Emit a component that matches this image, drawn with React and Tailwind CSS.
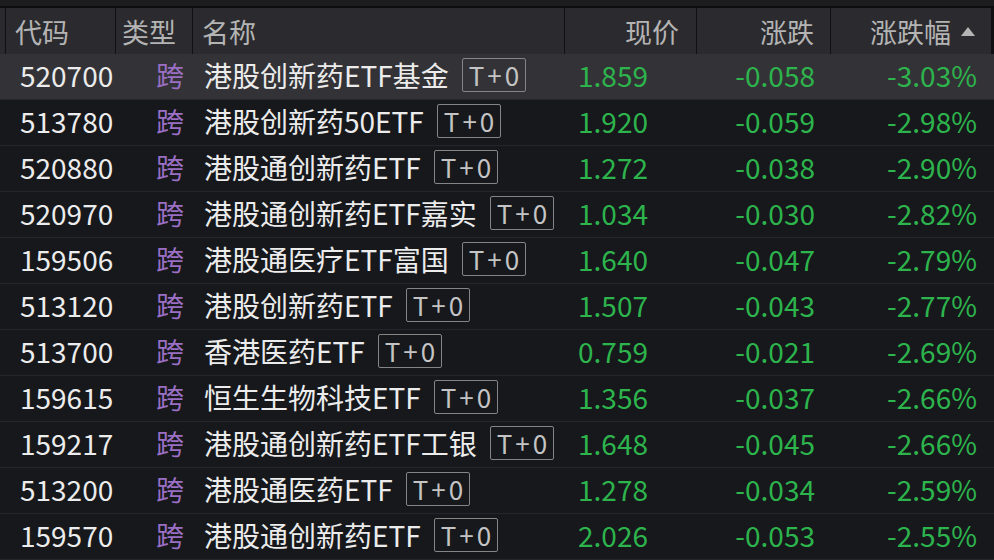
import React from "react";

const rows = [
  { code: "520700", name: "港股创新药ETF基金", price: "1.859", chg: "-0.058", pct: "-3.03%" },
  { code: "513780", name: "港股创新药50ETF", price: "1.920", chg: "-0.059", pct: "-2.98%" },
  { code: "520880", name: "港股通创新药ETF", price: "1.272", chg: "-0.038", pct: "-2.90%" },
  { code: "520970", name: "港股通创新药ETF嘉实", price: "1.034", chg: "-0.030", pct: "-2.82%" },
  { code: "159506", name: "港股通医疗ETF富国", price: "1.640", chg: "-0.047", pct: "-2.79%" },
  { code: "513120", name: "港股创新药ETF", price: "1.507", chg: "-0.043", pct: "-2.77%" },
  { code: "513700", name: "香港医药ETF", price: "0.759", chg: "-0.021", pct: "-2.69%" },
  { code: "159615", name: "恒生生物科技ETF", price: "1.356", chg: "-0.037", pct: "-2.66%" },
  { code: "159217", name: "港股通创新药ETF工银", price: "1.648", chg: "-0.045", pct: "-2.66%" },
  { code: "513200", name: "港股通医药ETF", price: "1.278", chg: "-0.034", pct: "-2.59%" },
  { code: "159570", name: "港股通创新药ETF", price: "2.026", chg: "-0.053", pct: "-2.55%" },
];

const cols = "grid grid-cols-[6px_110px_77px_372px_132px_134px_163px]";

const App = () => {
  return (
    <div
      className="w-[994px] h-[560px] overflow-hidden bg-[#16181c] text-[28px] leading-none"
      style={{ fontFamily: '"Noto Sans CJK SC", "Noto Sans", sans-serif' }}
    >
      {/* top strip */}
      <div className="h-[6px] bg-[#1c1c1f]" />
      <div className="h-[2px] bg-[#0d0d0f]" />

      {/* header */}
      <div className={`${cols} h-[46px] bg-[#2b2b2f] text-[#b4b4b4] text-[27px]`}>
        <div className="border-r border-[#111114]" />
        <div className="flex items-center pl-[9px] border-r border-[#111114]">代码</div>
        <div className="flex items-center pl-[6px] border-r border-[#111114]">类型</div>
        <div className="flex items-center pl-[9px] border-r border-[#111114]">名称</div>
        <div className="flex items-center justify-end pr-[17px] border-r border-[#111114]">现价</div>
        <div className="flex items-center justify-end pr-[16px] border-r border-[#111114]">涨跌</div>
        <div className="flex items-center justify-end pr-[16px] gap-[10px] border-r-[3px] border-[#111114]">
          涨跌幅
          <svg width="14" height="9" viewBox="0 0 14 9">
            <path d="M7 0 L14 9 L0 9 Z" fill="#b4b4b4" />
          </svg>
        </div>
      </div>

      {/* rows */}
      {rows.map((r, i) => (
        <div
          key={r.code + i}
          className={`${cols} h-[46px] pb-[3px] border-b border-[#24262b] ${i === 0 ? "bg-[#333337]" : ""}`}
        >
          <div />
          <div className="flex items-center pl-[14px] text-[#ececec]">{r.code}</div>
          <div className="flex items-center justify-end pr-[9px] text-[#9a6fc4]">跨</div>
          <div className="flex items-center pl-[11px] text-[#ececec] gap-[13px]">
            <span>{r.name}</span>
            <span className="border border-[#858585] rounded-[2px] h-[34px] pl-[6px] pr-[3px] tracking-[3px] flex items-center text-[#c4c4c4] text-[26px]">
              T+0
            </span>
          </div>
          <div className="flex items-center justify-end pr-[49px] text-[#2db44c]">{r.price}</div>
          <div className="flex items-center justify-end pr-[16px] text-[#2db44c]">{r.chg}</div>
          <div className="flex items-center justify-end pr-[17px] text-[#2db44c]">{r.pct}</div>
        </div>
      ))}
    </div>
  );
};

export default App;
